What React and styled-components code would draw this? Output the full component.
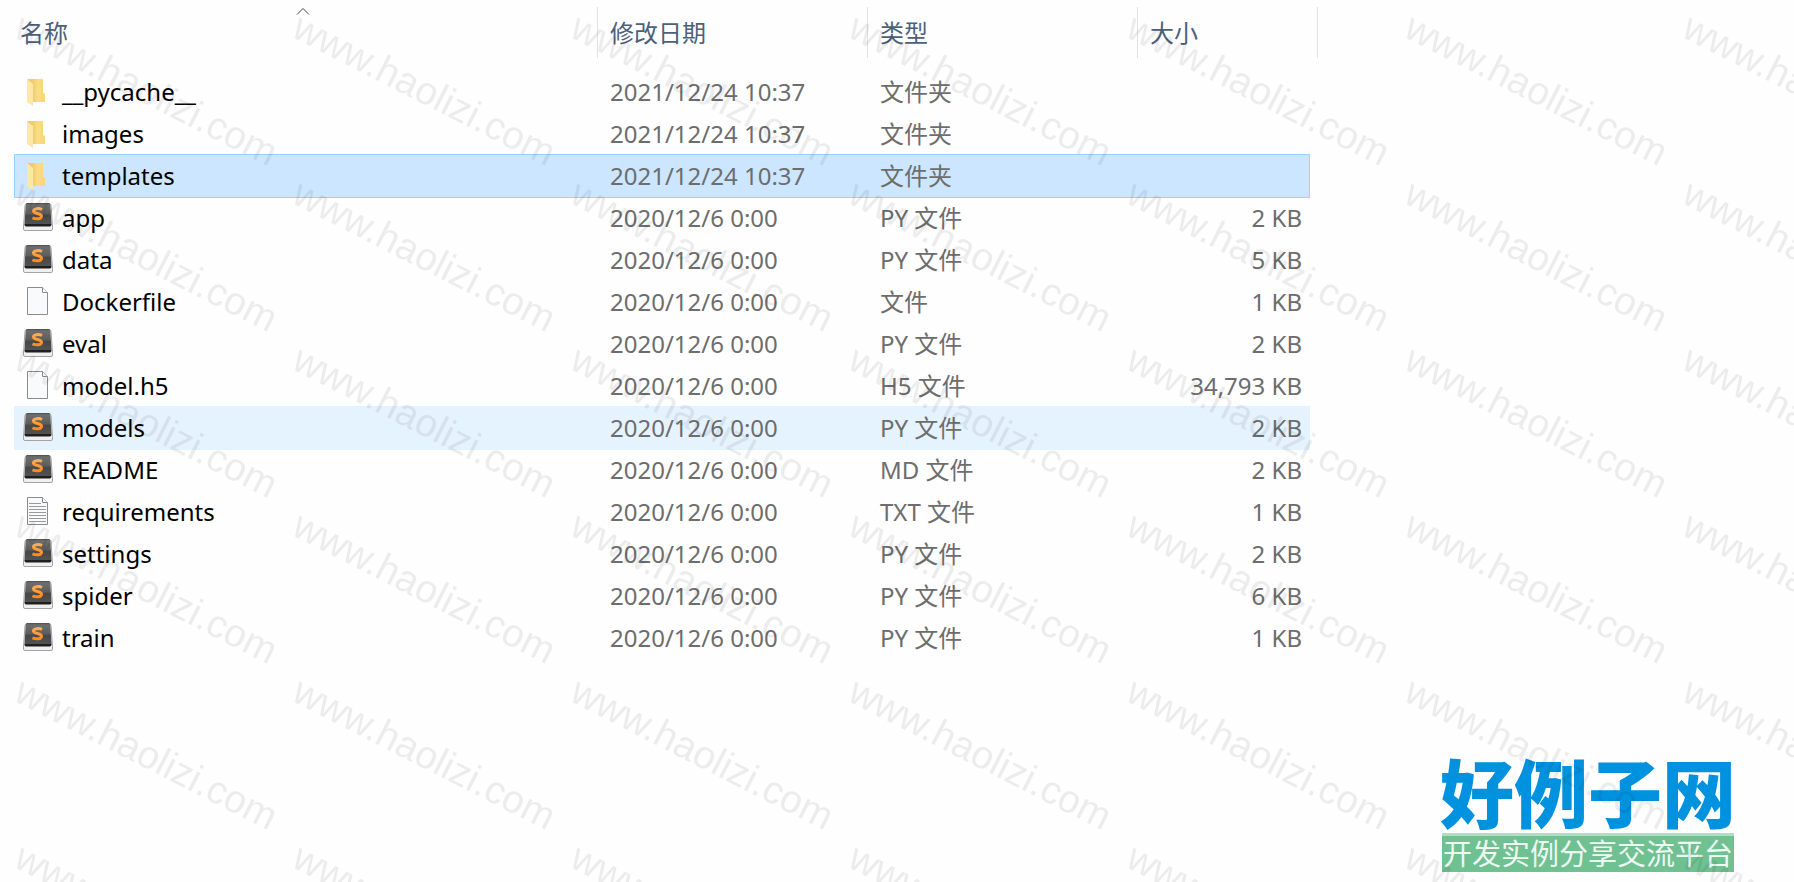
import React from 'react';
import styled, { createGlobalStyle, css } from 'styled-components';

const GlobalStyle = createGlobalStyle`
  * {
    box-sizing: border-box;
  }
  body {
    margin: 0;
    background-color: #fefefe;
    font-family: 'Noto Sans', 'Noto Sans CJK SC', sans-serif;
  }
`;

const Page = styled.div`
  position: relative;
  display: flex;
  flex-direction: column;
  min-height: 100vh;
  overflow: hidden;
`;

const ListPanel = styled.main`
  padding: 7px 15px 20px;
`;

const FileTable = styled.table`
  width: 100%;
  max-width: 1294px;
  table-layout: fixed;
  border-collapse: collapse;
  font-size: 24px;
  line-height: 32px;
`;

const Column = styled.col`
  width: ${({ $width }) => $width || 'auto'};
`;

const HeaderCell = styled.th`
  padding: 0 0 13px;
  font-weight: 400;
  text-align: left;
`;

const HeaderLabel = styled.div`
  position: relative;
  display: flex;
  align-items: center;
  height: 51px;
  padding-left: 12px;
  border-right: 1px solid #e2e2e2;
  color: #4c607a;
  ${({ $first }) => $first && css`
    margin-left: -7px;
  `}
  ${({ $last }) => $last && css`
    margin-right: -9px;
  `}
`;

const SortArrow = styled.svg`
  position: absolute;
  top: 0;
  left: 50%;
  width: 14px;
  height: 8px;
  margin-left: -7px;
`;

const Row = styled.tr`
  height: 42px;
  ${({ $state }) => $state === 'selected' && css`
    background-color: #cce6ff;
    outline: 1px solid #99d1ff;
  `}
  ${({ $state }) => $state === 'hover' && css`
    background-color: #e5f3ff;
    outline: 1px solid #e5f3ff;
  `}
`;

const Cell = styled.td`
  padding: 0 7px 0 12px;
  color: #6d6d6d;
  text-align: ${({ $align }) => $align || 'left'};
  white-space: nowrap;
`;

const NameCell = styled(Cell)`
  padding-left: 7px;
  color: #000;
`;

const FileName = styled.div`
  display: flex;
  align-items: center;
  gap: 8px;
`;

const Icon = styled.svg`
  flex: none;
  width: 32px;
  height: 32px;
`;

const Footer = styled.footer`
  display: flex;
  justify-content: flex-end;
  margin-top: auto;
  padding: 0 60px 10px;
`;

const Brand = styled.div`
  display: flex;
  flex-direction: column;
  font-family: 'Noto Sans CJK SC', sans-serif;
`;

const BrandName = styled.div`
  margin: 0 -2px;
  padding-bottom: 4px;
  color: #0092df;
  font-size: 74px;
  font-weight: 900;
  line-height: 78px;
  text-align: center;
`;

const BrandTagline = styled.div`
  padding-bottom: 4px;
  border-top: 3px solid #b4dcc5;
  background-color: #6fc191;
  color: #eef9f2;
  font-size: 29px;
  line-height: 32px;
  text-align: center;
`;

const WatermarkLayer = styled.svg`
  position: absolute;
  top: 0;
  left: 0;
  width: 100%;
  height: 100%;
  pointer-events: none;
`;

const FolderIcon = () => (
  <Icon viewBox="0 0 32 32" aria-hidden="true">
    <defs>
      <linearGradient id="folder-back" x1="0" y1="0" x2="1" y2="0">
        <stop offset="0.3" stopColor="#eecb6e" />
        <stop offset="0.6" stopColor="#fbdb85" />
        <stop offset="1" stopColor="#f8d678" />
      </linearGradient>
    </defs>
    <path d="M5 3h16v14l2 1v8H10z" fill="url(#folder-back)" />
    <path d="M5 3l6 5v22l-6-4z" fill="#ffe8a6" />
  </Icon>
);

const ScriptIcon = () => (
  <Icon viewBox="0 0 32 32" aria-hidden="true">
    <defs>
      <linearGradient id="keycap" x1="0" y1="0" x2="0" y2="1">
        <stop offset="0" stopColor="#4a4a4a" />
        <stop offset="0.08" stopColor="#6e6e6e" />
        <stop offset="0.45" stopColor="#5e5e5e" />
        <stop offset="0.55" stopColor="#474747" />
        <stop offset="1" stopColor="#555" />
      </linearGradient>
      <linearGradient id="keycap-letter" x1="0" y1="0" x2="0" y2="1">
        <stop offset="0" stopColor="#ffad55" />
        <stop offset="1" stopColor="#ff8a1e" />
      </linearGradient>
    </defs>
    <path d="M5 1.500h22q1.500 0 2 2l1.500 21.500v2q0 1.500-1.500 1.500H3q-1.500 0-1.500-1.500v-2L3 3.500q.5-2 2-2z" fill="#f0f0f0" stroke="#a3a3a3" />
    <path d="M5.500 1h21q1.500 0 1.800 2l1.200 19q0 2-1.500 2H4q-1.500 0-1.500-2L3.700 3q.3-2 1.800-2z" fill="url(#keycap)" />
    <path d="M2.600 22h26.800q0 2.500-1.500 2.500H4q-1.400 0-1.400-2.500z" fill="#1f1f1f" />
    <path d="M20 7.500C17.500 6.200 11.500 6 11.500 9c0 3.200 8 1.800 8 5.200 0 3.300-6 3-9 1.600" fill="none" stroke="url(#keycap-letter)" strokeWidth="3" />
  </Icon>
);

const DocumentIcon = ({ lines }) => (
  <Icon viewBox="0 0 32 32" aria-hidden="true">
    <path d="M5.500 1.500h15l5 5v22h-20z" fill="#f8fafb" stroke="#8c8c8c" />
    <path d="M20.500 1.500v5h5" fill="#fff" stroke="#8c8c8c" />
    {lines && <path d="M7 7.500h12M7 10.500h17M7 13.500h17M7 16.500h17M7 19.500h17M7 22.500h17M7 25.500h17" stroke="#9a9a9a" />}
  </Icon>
);

const icons = {
  folder: <FolderIcon />,
  script: <ScriptIcon />,
  file: <DocumentIcon />,
  text: <DocumentIcon lines />,
};

const files = [
  { name: '__pycache__', icon: 'folder', date: '2021/12/24 10:37', type: '文件夹' },
  { name: 'images', icon: 'folder', date: '2021/12/24 10:37', type: '文件夹' },
  { name: 'templates', icon: 'folder', date: '2021/12/24 10:37', type: '文件夹', state: 'selected' },
  { name: 'app', icon: 'script', date: '2020/12/6 0:00', type: 'PY 文件', size: '2 KB' },
  { name: 'data', icon: 'script', date: '2020/12/6 0:00', type: 'PY 文件', size: '5 KB' },
  { name: 'Dockerfile', icon: 'file', date: '2020/12/6 0:00', type: '文件', size: '1 KB' },
  { name: 'eval', icon: 'script', date: '2020/12/6 0:00', type: 'PY 文件', size: '2 KB' },
  { name: 'model.h5', icon: 'file', date: '2020/12/6 0:00', type: 'H5 文件', size: '34,793 KB' },
  { name: 'models', icon: 'script', date: '2020/12/6 0:00', type: 'PY 文件', size: '2 KB', state: 'hover' },
  { name: 'README', icon: 'script', date: '2020/12/6 0:00', type: 'MD 文件', size: '2 KB' },
  { name: 'requirements', icon: 'text', date: '2020/12/6 0:00', type: 'TXT 文件', size: '1 KB' },
  { name: 'settings', icon: 'script', date: '2020/12/6 0:00', type: 'PY 文件', size: '2 KB' },
  { name: 'spider', icon: 'script', date: '2020/12/6 0:00', type: 'PY 文件', size: '6 KB' },
  { name: 'train', icon: 'script', date: '2020/12/6 0:00', type: 'PY 文件', size: '1 KB' },
];

const Watermark = () => (
  <WatermarkLayer aria-hidden="true">
    <defs>
      <pattern id="watermark" width="278" height="166" patternUnits="userSpaceOnUse">
        <text
          transform="translate(12 36) rotate(27)"
          fontFamily="'Liberation Sans', Arial, sans-serif"
          fontSize="39"
          fill="#000"
          fillOpacity="0.07"
        >
          www.haolizi.com
        </text>
      </pattern>
    </defs>
    <rect width="100%" height="100%" fill="url(#watermark)" />
  </WatermarkLayer>
);

const App = () => {
  return (
    <Page>
      <GlobalStyle />
      <ListPanel>
        <FileTable>
          <colgroup>
            <Column />
            <Column $width="270px" />
            <Column $width="270px" />
            <Column $width="171px" />
          </colgroup>
          <thead>
            <tr>
              <HeaderCell scope="col" aria-sort="ascending">
                <HeaderLabel $first>
                  名称
                  <SortArrow viewBox="0 0 14 8" aria-hidden="true">
                    <path d="M1 7.500l6-6 6 6" fill="none" stroke="#444" />
                  </SortArrow>
                </HeaderLabel>
              </HeaderCell>
              <HeaderCell scope="col">
                <HeaderLabel>修改日期</HeaderLabel>
              </HeaderCell>
              <HeaderCell scope="col">
                <HeaderLabel>类型</HeaderLabel>
              </HeaderCell>
              <HeaderCell scope="col">
                <HeaderLabel $last>大小</HeaderLabel>
              </HeaderCell>
            </tr>
          </thead>
          <tbody>
            {files.map((file) => (
              <Row key={file.name} $state={file.state}>
                <NameCell>
                  <FileName>
                    {icons[file.icon]}
                    {file.name}
                  </FileName>
                </NameCell>
                <Cell>{file.date}</Cell>
                <Cell>{file.type}</Cell>
                <Cell $align="right">{file.size}</Cell>
              </Row>
            ))}
          </tbody>
        </FileTable>
      </ListPanel>
      <Footer>
        <Brand>
          <BrandName>好例子网</BrandName>
          <BrandTagline>开发实例分享交流平台</BrandTagline>
        </Brand>
      </Footer>
      <Watermark />
    </Page>
  );
};

export default App;
